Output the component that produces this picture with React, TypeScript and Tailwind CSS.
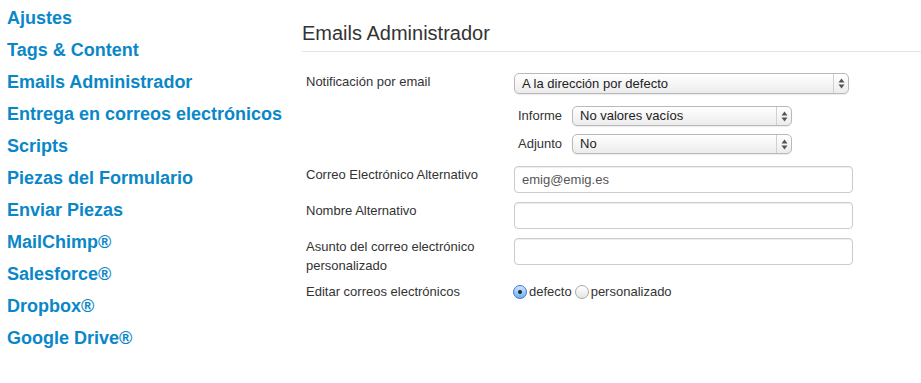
import type { ReactNode } from "react";

const links = [
  "Ajustes",
  "Tags & Content",
  "Emails Administrador",
  "Entrega en correos electrónicos",
  "Scripts",
  "Piezas del Formulario",
  "Enviar Piezas",
  "MailChimp®",
  "Salesforce®",
  "Dropbox®",
  "Google Drive®",
];

function Arrows() {
  return (
    <svg width="7" height="11" viewBox="0 0 7 11" aria-hidden="true">
      <path d="M3.5 0.5 L6.5 4.5 H0.5 Z" fill="#555" />
      <path d="M3.5 10.5 L6.5 6.5 H0.5 Z" fill="#555" />
    </svg>
  );
}

function Select({ value, className }: { value: string; className: string }) {
  return (
    <div
      className={`flex items-stretch rounded-[5px] border border-[#b9b9b9] bg-gradient-to-b from-white to-[#ececec] shadow-[0_1px_1px_rgba(0,0,0,0.08)] ${className}`}
    >
      <span className="flex-1 flex items-center pl-[7px] text-[13px] text-[#222] truncate">{value}</span>
      <span className="w-[15px] border-l border-[#d0d0d0] flex items-center justify-center">
        <Arrows />
      </span>
    </div>
  );
}

function Row({ label, children, className = "" }: { label: ReactNode; children: ReactNode; className?: string }) {
  return (
    <div className={`flex ${className}`}>
      <div className="w-[212px] pl-[4px] pr-2 -mt-[1px] text-[13px] leading-[19px] text-[#333]">{label}</div>
      <div>{children}</div>
    </div>
  );
}

function Input({ value = "" }: { value?: string }) {
  return (
    <div className="w-[339px] h-[27px] rounded-[4px] border border-[#cccccc] bg-white shadow-[inset_0_1px_1px_rgba(0,0,0,0.075)] flex items-center px-[7px] text-[13px] text-[#555]">
      {value}
    </div>
  );
}

function Radio({ checked }: { checked: boolean }) {
  return checked ? (
    <span className="w-[14px] h-[14px] rounded-full border border-[#3a78c8] bg-gradient-to-b from-[#cfe6fb] to-[#6fb0ec] flex items-center justify-center">
      <span className="w-[4px] h-[4px] rounded-full bg-[#1b2a3a]" />
    </span>
  ) : (
    <span className="w-[14px] h-[14px] rounded-full border border-[#a8a8a8] bg-gradient-to-b from-white to-[#e6e6e6]" />
  );
}

export default function App() {
  return (
    <div className="flex w-[921px] h-[383px] bg-white font-['Liberation_Sans',Arial,sans-serif]">
      <nav className="w-[302px] shrink-0 pl-[7px] pt-[2px]">
        {links.map((l) => (
          <a key={l} href="#" className="block text-[18px] leading-[32px] font-bold text-[#0a87c8] whitespace-nowrap">
            {l}
          </a>
        ))}
      </nav>

      <main className="flex-1">
        <h2 className="mt-[21px] text-[20px] leading-[24px] text-[#333]">Emails Administrador</h2>
        <div className="mt-[6px] border-b border-[#e5e5e5]" />

        <Row label="Notificación por email" className="mt-[21px]">
          <Select value="A la dirección por defecto" className="w-[335px] h-[21px]" />
        </Row>

        <div className="flex ml-[216px] mt-[12px] items-center">
          <span className="w-[54px] text-[13px] text-[#333]">Informe</span>
          <Select value="No valores vacíos" className="w-[220px] h-[20px]" />
        </div>
        <div className="flex ml-[216px] mt-[8px] items-center">
          <span className="w-[54px] text-[13px] text-[#333]">Adjunto</span>
          <Select value="No" className="w-[220px] h-[20px]" />
        </div>

        <Row label="Correo Electrónico Alternativo" className="mt-[12px]">
          <Input value="emig@emig.es" />
        </Row>
        <Row label="Nombre Alternativo" className="mt-[9px]">
          <Input />
        </Row>
        <Row label={<>Asunto del correo electrónico<br />personalizado</>} className="mt-[9px]">
          <Input />
        </Row>

        <div className="flex mt-[7px] h-[19px] items-center text-[13px] text-[#333]">
          <div className="w-[211px] pl-[4px]">Editar correos electrónicos</div>
          <label className="flex items-center gap-[2px]">
            <Radio checked />
            <span>defecto</span>
          </label>
          <label className="flex items-center gap-[2px] ml-[3px]">
            <Radio checked={false} />
            <span>personalizado</span>
          </label>
        </div>
      </main>
    </div>
  );
}
